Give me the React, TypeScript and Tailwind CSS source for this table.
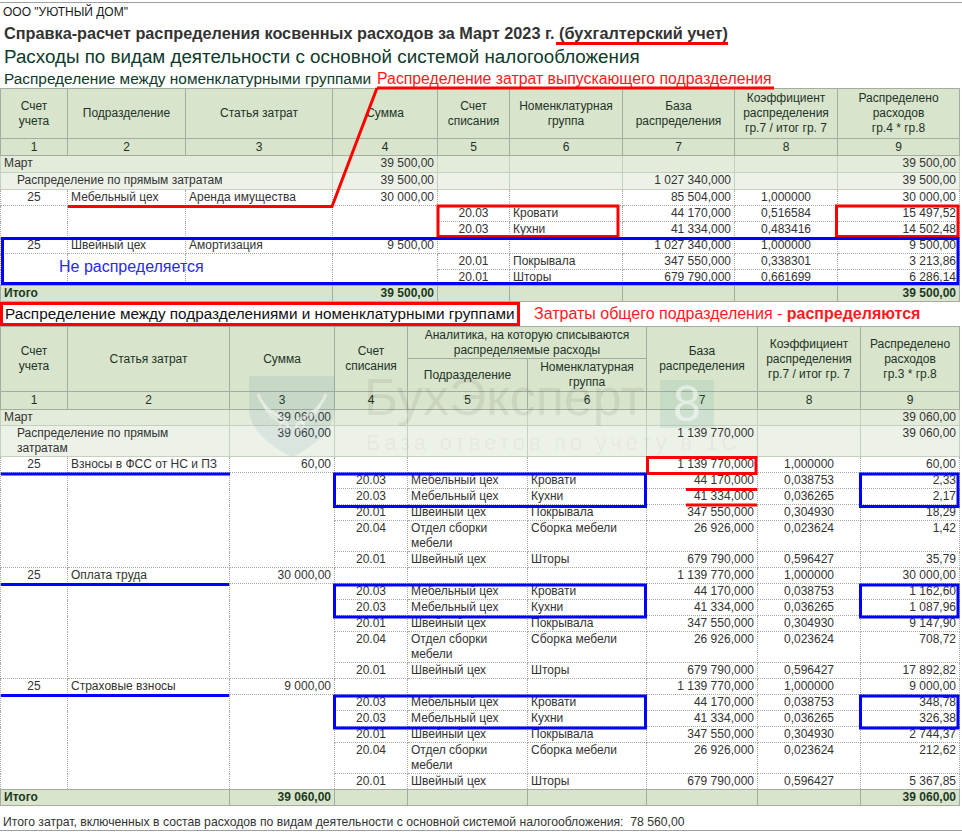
import React from 'react';

const th = "border border-[#a6ada0] bg-[#d9e4cc] font-normal text-[#1d3327] text-center align-middle leading-[15px] px-[2px] p-0";
const grp = "border border-[#c6d0be] h-[16px] p-0 px-[3px] leading-[15px] align-top";
const det = "border border-dotted border-[#a9a9a9] bg-white h-[16px] p-0 px-[3px] leading-[15px] align-top";
const tot = "border border-[#a6ada0] bg-[#d9e4cc] h-[16px] p-0 px-[3px] leading-[15px] font-bold text-[#1c3a22]";

type Det1 = [string, string, string, string, string];

const t1Groups: { acc: string; dep: string; art: string; sum: string; base: string; k: string; res: string; rows: Det1[] }[] = [
  {
    acc: '25', dep: 'Мебельный цех', art: 'Аренда имущества', sum: '30 000,00', base: '85 504,000', k: '1,000000', res: '30 000,00',
    rows: [
      ['20.03', 'Кровати', '44 170,000', '0,516584', '15 497,52'],
      ['20.03', 'Кухни', '41 334,000', '0,483416', '14 502,48'],
    ],
  },
  {
    acc: '25', dep: 'Швейный цех', art: 'Амортизация', sum: '9 500,00', base: '1 027 340,000', k: '1,000000', res: '9 500,00',
    rows: [
      ['20.01', 'Покрывала', '347 550,000', '0,338301', '3 213,86'],
      ['20.01', 'Шторы', '679 790,000', '0,661699', '6 286,14'],
    ],
  },
];

const t2Groups: { art: string; sum: string; res: string[] }[] = [
  { art: 'Взносы в ФСС от НС и ПЗ', sum: '60,00', res: ['2,33', '2,17', '18,29', '1,42', '35,79'] },
  { art: 'Оплата труда', sum: '30 000,00', res: ['1 162,60', '1 087,96', '9 147,90', '708,72', '17 892,82'] },
  { art: 'Страховые взносы', sum: '9 000,00', res: ['348,78', '326,38', '2 744,37', '212,62', '5 367,85'] },
];

const t2Base: [string, string, string, string, string][] = [
  ['20.03', 'Мебельный цех', 'Кровати', '44 170,000', '0,038753'],
  ['20.03', 'Мебельный цех', 'Кухни', '41 334,000', '0,036265'],
  ['20.01', 'Швейный цех', 'Покрывала', '347 550,000', '0,304930'],
  ['20.04', 'Отдел сборки мебели', 'Сборка мебели', '26 926,000', '0,023624'],
  ['20.01', 'Швейный цех', 'Шторы', '679 790,000', '0,596427'],
];

const Watermark = () => (
  <div className="absolute inset-0 pointer-events-none">
    <svg className="absolute left-[248px] top-[374px]" width="88" height="84" viewBox="0 0 88 84">
      <path d="M1 2 H87 V34 C87 56 66 72 44 83 C22 72 1 56 1 34 Z" fill="rgba(70,140,160,0.12)" />
      <path d="M10 20 C16 36 28 42 40 46" fill="none" stroke="rgba(255,255,255,0.45)" strokeWidth="3" />
      <path d="M78 20 C72 36 60 42 48 46" fill="none" stroke="rgba(255,255,255,0.45)" strokeWidth="3" />
      <path d="M16 32 C22 44 32 48 40 52" fill="none" stroke="rgba(255,255,255,0.35)" strokeWidth="2" />
      <path d="M72 32 C66 44 56 48 48 52" fill="none" stroke="rgba(255,255,255,0.35)" strokeWidth="2" />
      <circle cx="36" cy="52" r="4" fill="none" stroke="rgba(255,255,255,0.4)" strokeWidth="2" />
      <circle cx="52" cy="52" r="4" fill="none" stroke="rgba(255,255,255,0.4)" strokeWidth="2" />
    </svg>
    <div className="absolute left-[364px] top-[368px] text-[52px] leading-[58px] text-black/[0.065]">БухЭксперт</div>
    <div className="absolute left-[660px] top-[380px] w-[54px] h-[48px] bg-[#3a9a8a]/[0.12] flex items-center justify-center text-[50px] leading-[48px] text-white/50">8</div>
    <div className="absolute left-[366px] top-[430px] text-[22px] leading-[26px] tracking-[0.17em] text-black/[0.055]">База ответов по учёту в 1С</div>
  </div>
);

const Marks = () => (
  <svg className="absolute left-0 top-0 pointer-events-none" width="962" height="832">
    <g stroke="#ff0000" strokeWidth="3" fill="none">
      <line x1="556" y1="43.5" x2="728" y2="43.5" />
      <line x1="377" y1="88" x2="774" y2="88" />
      <polyline points="377,88 332,206.5 68,206.5" />
      <rect x="438" y="206" width="180" height="30.5" />
      <rect x="836.5" y="206" width="121.5" height="30.5" />
      <rect x="647.5" y="457.5" width="108.5" height="16" />
      <line x1="686" y1="489.5" x2="757" y2="489.5" />
      <line x1="686" y1="505" x2="757" y2="505" />
    </g>
    <g stroke="#0000ff" strokeWidth="3" fill="none">
      <rect x="2.5" y="238.5" width="955.5" height="45" />
      <line x1="1" y1="474" x2="230" y2="474" />
      <rect x="334.5" y="474" width="311" height="32.5" />
      <rect x="860.5" y="474" width="97.5" height="32.5" />
      <line x1="1" y1="584.5" x2="229" y2="584.5" />
      <rect x="334.5" y="585" width="311" height="32" />
      <rect x="860.5" y="585" width="97.5" height="32" />
      <line x1="1" y1="695.5" x2="229" y2="695.5" />
      <rect x="334.5" y="696" width="311" height="32" />
      <rect x="860.5" y="696" width="97.5" height="32" />
    </g>
  </svg>
);

const Table1 = () => (
  <table className="table-fixed border-collapse w-[959px] text-[12px] text-[#333]">
    <colgroup>
      <col className="w-[67px]" />
      <col className="w-[118px]" />
      <col className="w-[147px]" />
      <col className="w-[105px]" />
      <col className="w-[72px]" />
      <col className="w-[113px]" />
      <col className="w-[112px]" />
      <col className="w-[103px]" />
      <col className="w-[122px]" />
    </colgroup>
    <thead>
      <tr className="h-[50px]">
        <th className={th}>Счет<br />учета</th>
        <th className={th}>Подразделение</th>
        <th className={th}>Статья затрат</th>
        <th className={th}>Сумма</th>
        <th className={th}>Счет<br />списания</th>
        <th className={th}>Номенклатурная<br />группа</th>
        <th className={th}>База<br />распределения</th>
        <th className={th}>Коэффициент<br />распределения<br />гр.7 / итог гр. 7</th>
        <th className={th}>Распределено<br />расходов<br />гр.4 * гр.8</th>
      </tr>
      <tr className="h-[17px]">
        {['1', '2', '3', '4', '5', '6', '7', '8', '9'].map((n) => (
          <th key={n} className={th}>{n}</th>
        ))}
      </tr>
    </thead>
    <tbody>
      <tr className="bg-[#e3ebda] h-[17px]">
        <td colSpan={3} className={`${grp} align-middle`}>Март</td>
        <td className={`${grp} align-middle text-right`}>39 500,00</td>
        <td className={grp}></td>
        <td className={grp}></td>
        <td className={grp}></td>
        <td className={grp}></td>
        <td className={`${grp} align-middle text-right`}>39 500,00</td>
      </tr>
      <tr className="bg-[#edf2e8] h-[17px]">
        <td colSpan={3} className={`${grp} align-middle pl-[16px]`}>Распределение по прямым затратам</td>
        <td className={`${grp} align-middle text-right`}>39 500,00</td>
        <td className={grp}></td>
        <td className={grp}></td>
        <td className={`${grp} align-middle text-right`}>1 027 340,000</td>
        <td className={grp}></td>
        <td className={`${grp} align-middle text-right`}>39 500,00</td>
      </tr>
      {t1Groups.map((g) => (
        <React.Fragment key={g.dep}>
          <tr className="bg-[#eff3ec]">
            <td className={`${det} bg-[#eff3ec] text-center`}>{g.acc}</td>
            <td className={`${det} bg-[#eff3ec]`}>{g.dep}</td>
            <td className={`${det} bg-[#eff3ec]`}>{g.art}</td>
            <td className={`${det} bg-[#eff3ec] text-right`}>{g.sum}</td>
            <td className={`${det} bg-[#eff3ec]`}></td>
            <td className={`${det} bg-[#eff3ec]`}></td>
            <td className={`${det} bg-[#eff3ec] text-right`}>{g.base}</td>
            <td className={`${det} bg-[#eff3ec] text-center`}>{g.k}</td>
            <td className={`${det} bg-[#eff3ec] text-right`}>{g.res}</td>
          </tr>
          {g.rows.map((r, i) => (
            <tr key={i}>
              {i === 0 && (
                <>
                  <td rowSpan={2} className={det}></td>
                  <td rowSpan={2} className={det}></td>
                  <td rowSpan={2} className={det}></td>
                  <td rowSpan={2} className={det}></td>
                </>
              )}
              <td className={`${det} text-center`}>{r[0]}</td>
              <td className={det}>{r[1]}</td>
              <td className={`${det} text-right`}>{r[2]}</td>
              <td className={`${det} text-center`}>{r[3]}</td>
              <td className={`${det} text-right`}>{r[4]}</td>
            </tr>
          ))}
        </React.Fragment>
      ))}
      <tr>
        <td colSpan={3} className={tot}>Итого</td>
        <td className={`${tot} text-right`}>39 500,00</td>
        <td className={tot}></td>
        <td className={tot}></td>
        <td className={tot}></td>
        <td className={tot}></td>
        <td className={`${tot} text-right`}>39 500,00</td>
      </tr>
    </tbody>
  </table>
);

const Table2 = () => (
  <table className="table-fixed border-collapse w-[959px] text-[12px] text-[#333]">
    <colgroup>
      <col className="w-[67px]" />
      <col className="w-[162px]" />
      <col className="w-[105px]" />
      <col className="w-[73px]" />
      <col className="w-[120px]" />
      <col className="w-[119px]" />
      <col className="w-[111px]" />
      <col className="w-[103px]" />
      <col className="w-[99px]" />
    </colgroup>
    <thead>
      <tr className="h-[32px]">
        <th rowSpan={2} className={th}>Счет<br />учета</th>
        <th rowSpan={2} className={th}>Статья затрат</th>
        <th rowSpan={2} className={th}>Сумма</th>
        <th rowSpan={2} className={th}>Счет<br />списания</th>
        <th colSpan={2} className={th}>Аналитика, на которую списываются<br />распределяемые расходы</th>
        <th rowSpan={2} className={th}>База<br />распределения</th>
        <th rowSpan={2} className={th}>Коэффициент<br />распределения<br />гр.7 / итог гр. 7</th>
        <th rowSpan={2} className={th}>Распределено<br />расходов<br />гр.3 * гр.8</th>
      </tr>
      <tr className="h-[33px]">
        <th className={th}>Подразделение</th>
        <th className={th}>Номенклатурная<br />группа</th>
      </tr>
      <tr className="h-[18px]">
        {['1', '2', '3', '4', '5', '6', '7', '8', '9'].map((n) => (
          <th key={n} className={th}>{n}</th>
        ))}
      </tr>
    </thead>
    <tbody>
      <tr className="bg-[#e3ebda]">
        <td colSpan={2} className={grp}>Март</td>
        <td className={`${grp} text-right`}>39 060,00</td>
        <td className={grp}></td>
        <td className={grp}></td>
        <td className={grp}></td>
        <td className={grp}></td>
        <td className={grp}></td>
        <td className={`${grp} text-right`}>39 060,00</td>
      </tr>
      <tr className="bg-[#edf2e8]">
        <td colSpan={2} className={`${grp} pl-[16px] pr-[14px]`}>Распределение по прямым затратам</td>
        <td className={`${grp} text-right`}>39 060,00</td>
        <td className={grp}></td>
        <td className={grp}></td>
        <td className={grp}></td>
        <td className={`${grp} text-right`}>1 139 770,000</td>
        <td className={grp}></td>
        <td className={`${grp} text-right`}>39 060,00</td>
      </tr>
      {t2Groups.map((g) => (
        <React.Fragment key={g.art}>
          <tr className="bg-[#eff3ec]">
            <td className={`${det} bg-[#eff3ec] text-center`}>25</td>
            <td className={`${det} bg-[#eff3ec]`}>{g.art}</td>
            <td className={`${det} bg-[#eff3ec] text-right`}>{g.sum}</td>
            <td className={`${det} bg-[#eff3ec]`}></td>
            <td className={`${det} bg-[#eff3ec]`}></td>
            <td className={`${det} bg-[#eff3ec]`}></td>
            <td className={`${det} bg-[#eff3ec] text-right`}>1 139 770,000</td>
            <td className={`${det} bg-[#eff3ec] text-center`}>1,000000</td>
            <td className={`${det} bg-[#eff3ec] text-right`}>{g.sum}</td>
          </tr>
          {t2Base.map((r, i) => (
            <tr key={i}>
              {i === 0 && (
                <>
                  <td rowSpan={5} className={det}></td>
                  <td rowSpan={5} className={det}></td>
                  <td rowSpan={5} className={det}></td>
                </>
              )}
              <td className={`${det} text-center`}>{r[0]}</td>
              <td className={det}>{r[1]}</td>
              <td className={det}>{r[2]}</td>
              <td className={`${det} text-right`}>{r[3]}</td>
              <td className={`${det} text-center`}>{r[4]}</td>
              <td className={`${det} text-right`}>{g.res[i]}</td>
            </tr>
          ))}
        </React.Fragment>
      ))}
      <tr>
        <td colSpan={2} className={tot}>Итого</td>
        <td className={`${tot} text-right`}>39 060,00</td>
        <td className={tot}></td>
        <td className={tot}></td>
        <td className={tot}></td>
        <td className={tot}></td>
        <td className={tot}></td>
        <td className={`${tot} text-right`}>39 060,00</td>
      </tr>
    </tbody>
  </table>
);

const App = () => {
  return (
    <div className="relative w-[962px] h-[832px] bg-white overflow-hidden font-['Liberation_Sans',Arial,sans-serif] text-[12px] text-[#222]">
      <div className="mt-[2px] border-t border-[#a0a0a0]" />
      <div className="h-[19px] leading-[19px] pl-[3px] text-[#1a1a1a]">ООО "УЮТНЫЙ ДОМ"</div>
      <div className="h-[22px] leading-[22px] pl-[4px] text-[16.25px] font-bold text-[#333]">
        Справка-расчет распределения косвенных расходов за Март 2023 г. (бухгалтерский учет)
      </div>
      <div className="h-[26px] leading-[26px] pl-[4px] text-[18.8px] text-[#0e3a2a]">
        Расходы по видам деятельности с основной системой налогообложения
      </div>
      <div className="h-[18px] flex items-end leading-[18px]">
        <span className="pl-[4px] text-[15.4px] text-[#0e3a2a]">Распределение между номенклатурными группами</span>
        <span className="ml-[6px] text-[15.8px] text-[#ff1a1a]">Распределение затрат выпускающего подразделения</span>
      </div>
      <Table1 />
      <div className="flex items-center h-[24px]">
        <div className="w-[520px] h-[24px] border-[3px] border-[#ff0000] pl-[2px] text-[15.3px] leading-[18px] text-[#111] whitespace-nowrap overflow-hidden">
          Распределение между подразделениями и номенклатурными группами
        </div>
        <div className="ml-[14px] text-[16px] leading-[18px] text-[#ff1a1a]">
          Затраты общего подразделения - <span className="font-bold">распределяются</span>
        </div>
      </div>
      <Table2 />
      <div className="h-[25px] leading-[32px] pl-[3px] text-[12.2px] text-[#333] border-b border-[#a0a0a0]">
        Итого затрат, включенных в состав расходов по видам деятельности с основной системой налогообложения:&nbsp; 78 560,00
      </div>
      <Watermark />
      <Marks />
      <div className="absolute left-[59px] top-[257px] text-[16px] leading-[20px] text-[#2a2af0]">Не распределяется</div>
    </div>
  );
};

export default App;
